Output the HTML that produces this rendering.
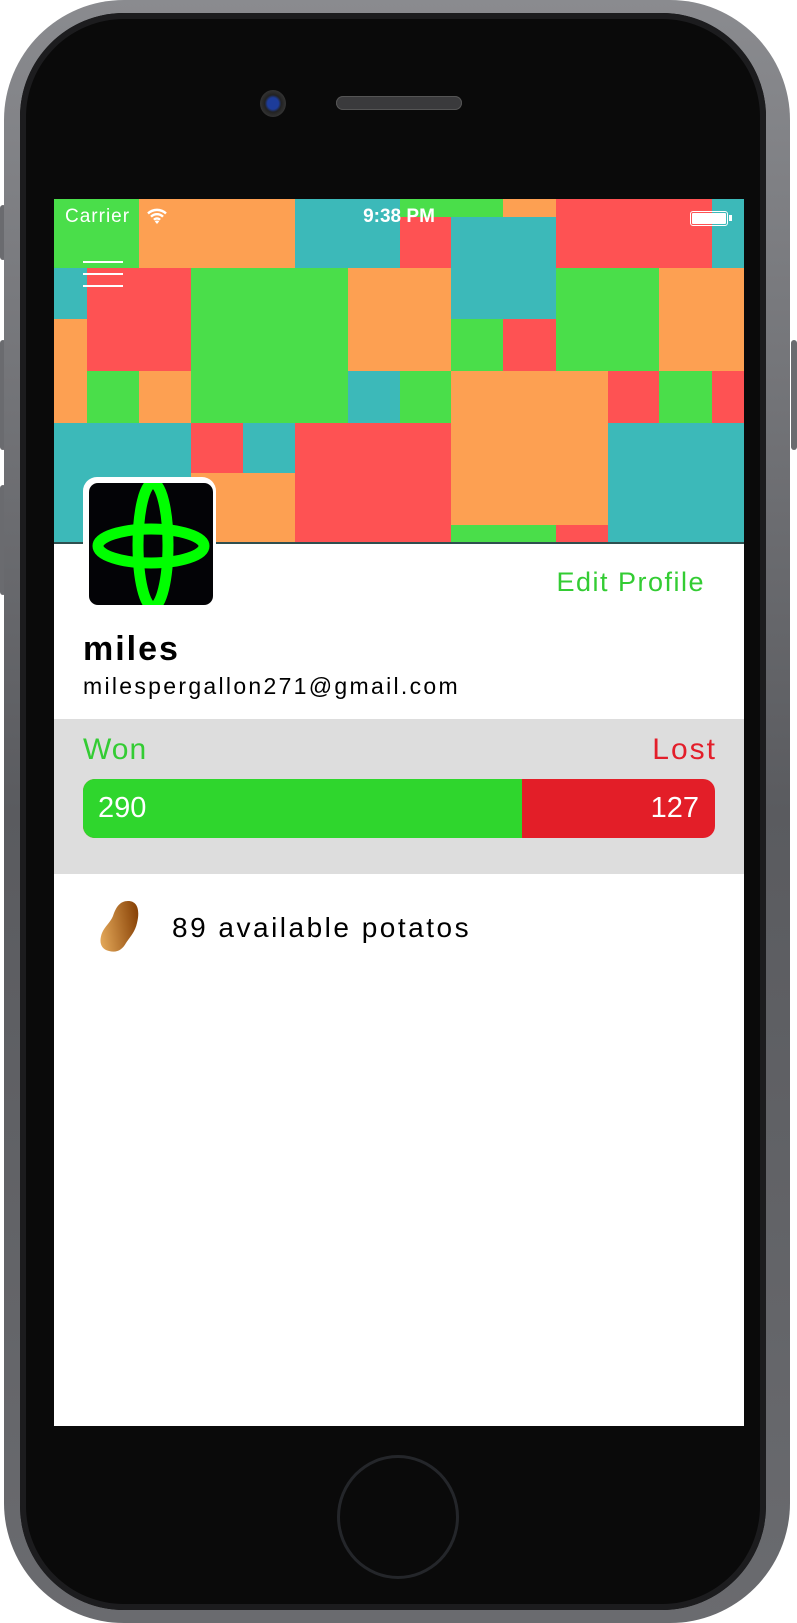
<!DOCTYPE html>
<html><head><meta charset="utf-8"><style>
*{margin:0;padding:0;box-sizing:border-box}
html,body{width:797px;height:1623px;background:#fff;overflow:hidden;font-family:"Liberation Sans",sans-serif}
.abs{position:absolute}
#phone{position:absolute;left:4px;top:0;width:786px;height:1623px;border-radius:120px;background:linear-gradient(#8a8b8f,#5a5b5f 50%,#6a6b6f);}
#bez{position:absolute;left:20px;top:13px;width:746px;height:1597px;border-radius:104px;background:#0a0a0a;box-shadow:inset 0 0 0 6px #1c1c1e}
#screen{position:absolute;left:54px;top:199px;width:690px;height:1227px;background:#fff;overflow:hidden}
.g{background:#4ade4a}.o{background:#fda052}.t{background:#3cb9b9}.r{background:#fe5253}
</style></head><body>
<div class="abs" style="left:0;top:205px;width:6px;height:55px;background:#6a6b6f;border-radius:3px"></div>
<div class="abs" style="left:0;top:340px;width:6px;height:110px;background:#6a6b6f;border-radius:3px"></div>
<div class="abs" style="left:0;top:485px;width:6px;height:110px;background:#6a6b6f;border-radius:3px"></div>
<div class="abs" style="left:791px;top:340px;width:6px;height:110px;background:#6a6b6f;border-radius:3px"></div>
<div id="phone"></div>
<div id="bez"></div>
<div class="abs" style="left:260px;top:90px;width:26px;height:27px;border-radius:50%;background:radial-gradient(#1d3c9a 30%,#222 45%,#333 70%,#111)"></div>
<div class="abs" style="left:336px;top:96px;width:126px;height:14px;border-radius:7px;background:#3a3a3c;box-shadow:inset 0 0 0 1px #555"></div>
<div class="abs" style="left:337px;top:1455px;width:122px;height:124px;border-radius:50%;border:3px solid #24262a"></div>
<div id="screen">
<div class="abs g" style="left:0;top:0;width:85px;height:69px"></div>
<div class="abs o" style="left:85px;top:0;width:156px;height:69px"></div>
<div class="abs t" style="left:241px;top:0;width:105px;height:69px"></div>
<div class="abs g" style="left:346px;top:0;width:103px;height:18px"></div>
<div class="abs r" style="left:346px;top:18px;width:51px;height:51px"></div>
<div class="abs t" style="left:397px;top:18px;width:105px;height:102px"></div>
<div class="abs o" style="left:449px;top:0;width:53px;height:18px"></div>
<div class="abs r" style="left:502px;top:0;width:156px;height:69px"></div>
<div class="abs t" style="left:658px;top:0;width:32px;height:69px"></div>
<div class="abs t" style="left:0;top:69px;width:33px;height:51px"></div>
<div class="abs o" style="left:0;top:120px;width:33px;height:104px"></div>
<div class="abs r" style="left:33px;top:69px;width:104px;height:103px"></div>
<div class="abs g" style="left:137px;top:69px;width:157px;height:155px"></div>
<div class="abs o" style="left:294px;top:69px;width:103px;height:103px"></div>
<div class="abs g" style="left:397px;top:120px;width:52px;height:52px"></div>
<div class="abs r" style="left:449px;top:120px;width:53px;height:52px"></div>
<div class="abs g" style="left:502px;top:69px;width:103px;height:103px"></div>
<div class="abs o" style="left:605px;top:69px;width:85px;height:103px"></div>
<div class="abs g" style="left:33px;top:172px;width:52px;height:52px"></div>
<div class="abs o" style="left:85px;top:172px;width:52px;height:52px"></div>
<div class="abs t" style="left:294px;top:172px;width:52px;height:52px"></div>
<div class="abs g" style="left:346px;top:172px;width:51px;height:52px"></div>
<div class="abs o" style="left:397px;top:172px;width:157px;height:154px"></div>
<div class="abs r" style="left:554px;top:172px;width:51px;height:52px"></div>
<div class="abs g" style="left:605px;top:172px;width:53px;height:52px"></div>
<div class="abs r" style="left:658px;top:172px;width:32px;height:52px"></div>
<div class="abs t" style="left:0;top:224px;width:137px;height:120px"></div>
<div class="abs r" style="left:137px;top:224px;width:52px;height:50px"></div>
<div class="abs t" style="left:189px;top:224px;width:52px;height:50px"></div>
<div class="abs o" style="left:137px;top:274px;width:104px;height:70px"></div>
<div class="abs r" style="left:241px;top:224px;width:156px;height:120px"></div>
<div class="abs g" style="left:397px;top:326px;width:105px;height:18px"></div>
<div class="abs r" style="left:502px;top:326px;width:52px;height:18px"></div>
<div class="abs t" style="left:554px;top:224px;width:136px;height:120px"></div>
<div class="abs" style="left:0;top:343px;width:690px;height:2px;background:#2f4f4f"></div>
<div class="abs" style="left:11px;top:6px;color:#fff;font-size:19px;line-height:24px;letter-spacing:1px">Carrier</div>
<svg class="abs" style="left:92px;top:8px" width="22" height="18" viewBox="0 0 22 18"><path d="M2 6.5a13 13 0 0 1 18 0M5 9.7a8.5 8.5 0 0 1 12 0M8 12.8a4 4 0 0 1 6 0" stroke="#fff" stroke-width="2.4" fill="none"/><path d="M11 17l-2.2-2.6a3 3 0 0 1 4.4 0z" fill="#fff"/></svg>
<div class="abs" style="left:300px;top:6px;width:90px;text-align:center;color:#fff;font-size:19px;font-weight:bold;line-height:24px">9:38 PM</div>
<div class="abs" style="left:636px;top:12px;width:38px;height:15px;border:1px solid #fff;border-radius:3px;padding:1px"><div style="width:100%;height:100%;background:#fff;border-radius:1px"></div></div>
<div class="abs" style="left:675px;top:16px;width:3px;height:6px;background:#fff"></div>
<div class="abs" style="left:29px;top:62px;width:40px;height:2px;background:#fff"></div>
<div class="abs" style="left:29px;top:74px;width:40px;height:2px;background:#fff"></div>
<div class="abs" style="left:29px;top:86px;width:40px;height:2px;background:#fff"></div>
<div class="abs" style="left:29px;top:278px;width:133px;height:132px;background:#fff;border-radius:14px"></div>
<svg class="abs" style="left:35px;top:284px;border-radius:9px;background:#030306" width="124" height="122" viewBox="0 0 124 122"><ellipse cx="64" cy="62" rx="15" ry="62" stroke="#00ff00" stroke-width="11" fill="none"/><ellipse cx="62" cy="63" rx="53" ry="17" stroke="#00ff00" stroke-width="11" fill="none"/></svg>
<div class="abs" style="right:39px;top:366px;color:#33cc33;font-size:27px;line-height:34px;letter-spacing:1.5px">Edit Profile</div>
<div class="abs" style="left:29px;top:430px;color:#000;font-size:34px;font-weight:bold;line-height:40px;letter-spacing:2px">miles</div>
<div class="abs" style="left:29px;top:473px;color:#000;font-size:23px;line-height:28px;letter-spacing:2.3px">milespergallon271@gmail.com</div>
<div class="abs" style="left:0;top:520px;width:690px;height:155px;background:#dddddd"></div>
<div class="abs" style="left:29px;top:533px;color:#33cc33;font-size:30px;line-height:36px;letter-spacing:1px">Won</div>
<div class="abs" style="right:27px;top:533px;color:#e31e2a;font-size:30px;line-height:36px;letter-spacing:2px">Lost</div>
<div class="abs" style="left:29px;top:580px;width:632px;height:59px;border-radius:12px;overflow:hidden;background:#e31e28">
<div style="position:absolute;left:0;top:0;width:439px;height:59px;background:#2fd62d"></div>
<div style="position:absolute;left:15px;top:12px;color:#fff;font-size:29px;line-height:34px">290</div>
<div style="position:absolute;right:16px;top:12px;color:#fff;font-size:29px;line-height:34px">127</div>
</div>
<svg class="abs" style="left:44px;top:700px" width="44" height="54" viewBox="0 0 44 54"><defs><linearGradient id="p" x1="0" y1="0.6" x2="1" y2="0.4"><stop offset="0" stop-color="#e0a456"/><stop offset="1" stop-color="#8a4408"/></linearGradient></defs><path d="M30 2c10 0 12 10 9 22c-2 9-7 14-11 20c-4 7-9 10-17 8C2 50 1 42 4 34c3-7 8-10 11-17C18 8 22 2 30 2z" fill="url(#p)"/></svg>
<div class="abs" style="left:118px;top:712px;color:#000;font-size:28px;line-height:34px;letter-spacing:2.5px">89 available potatos</div>
</div>
</body></html>
